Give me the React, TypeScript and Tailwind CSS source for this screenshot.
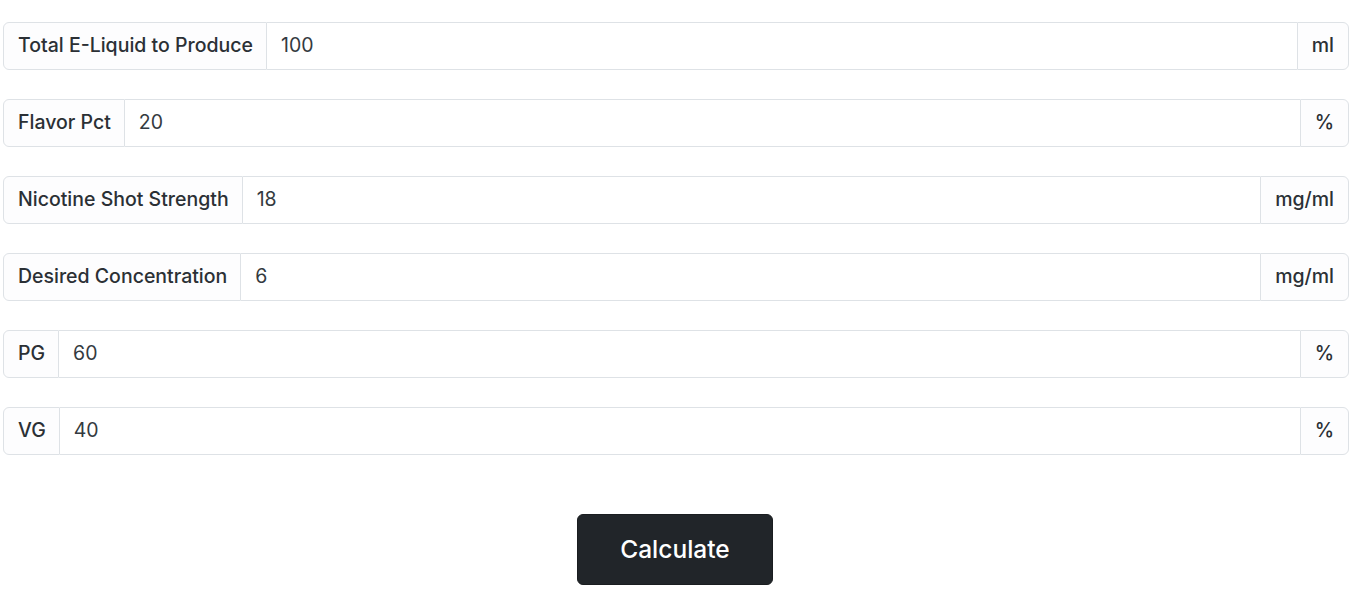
import { useState } from 'react';

const fields = [
    { label: 'Total E-Liquid to Produce', value: '100', unit: 'ml' },
    { label: 'Flavor Pct', value: '20', unit: '%' },
    { label: 'Nicotine Shot Strength', value: '18', unit: 'mg/ml' },
    { label: 'Desired Concentration', value: '6', unit: 'mg/ml' },
    { label: 'PG', value: '60', unit: '%' },
    { label: 'VG', value: '40', unit: '%' },
];

export default function App() {
    const [values, setValues] = useState(fields.map((f) => f.value));

    return (
        <div className="min-h-screen bg-white pl-[3px] pr-[9px] pt-[22px] text-[#212529]" style={{ fontFamily: 'Inter, "Noto Sans", sans-serif' }}>
            <div className="flex flex-col gap-[29px]">
                {fields.map((f, i) => (
                    <div key={f.label} className="flex h-[48px] text-[19.5px]">
                        <span className="flex items-center pl-[14px] pr-[13px] bg-[#fdfdfe] border border-[#dee2e6] rounded-l-[6px] font-medium whitespace-nowrap text-[#2b3035]">
                            {f.label}
                        </span>
                        <input
                            className="flex-1 min-w-0 px-[14px] border-y border-[#dee2e6] outline-none text-[#343a40]"
                            value={values[i]}
                            onChange={(e) => {
                                const next = [...values];
                                next[i] = e.target.value;
                                setValues(next);
                            }}
                        />
                        <span className="flex items-center px-[14px] bg-[#fdfdfe] border border-[#dee2e6] rounded-r-[6px] font-medium whitespace-nowrap text-[#2b3035]">
                            {f.unit}
                        </span>
                    </div>
                ))}
                <div className="flex justify-center mt-[30px] pr-[2px]">
                    <button className="w-[196px] h-[71px] bg-[#212529] text-white text-[24.5px] font-medium rounded-[6px] border border-[#1a1d20]">
                        Calculate
                    </button>
                </div>
            </div>
        </div>
    );
}
